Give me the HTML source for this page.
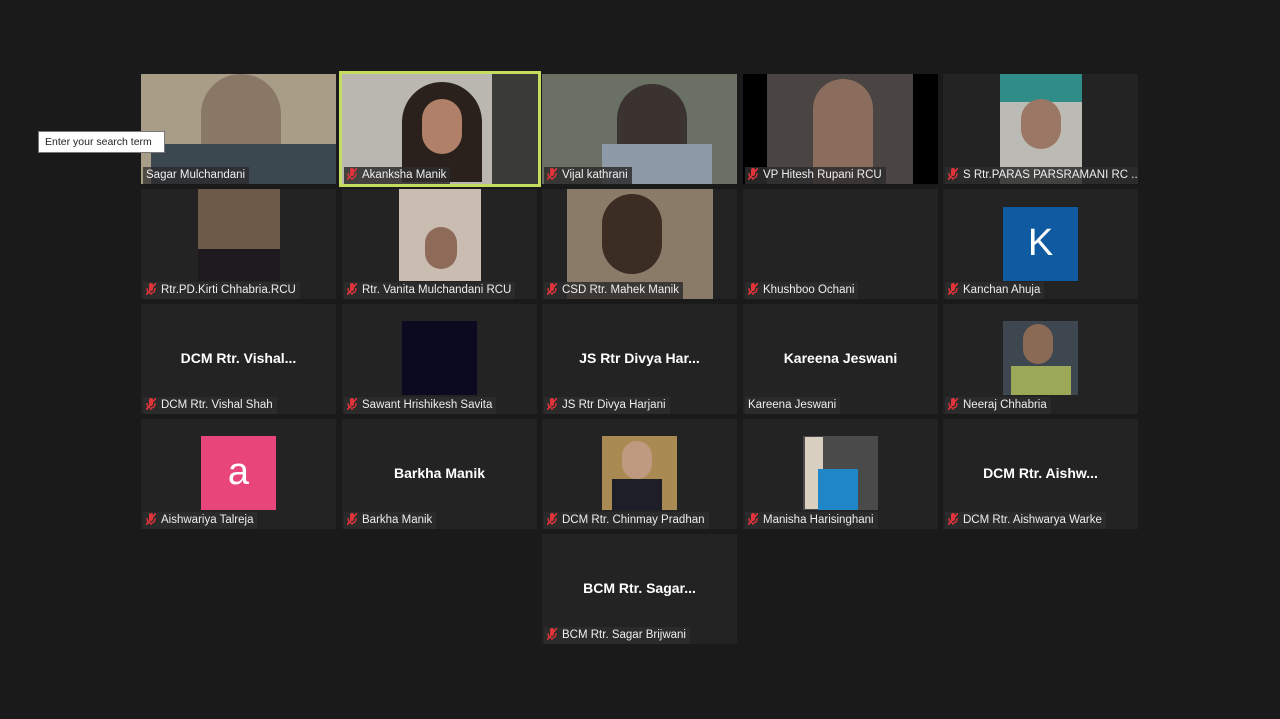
<!DOCTYPE html>
<html><head><meta charset="utf-8"><style>
body{margin:0;width:1280px;height:719px;background:#1a1a1a;position:relative;overflow:hidden;font-family:"Liberation Sans","DejaVu Sans",sans-serif}
.t{position:absolute;width:195px;height:110px;background:#232323;overflow:hidden}
.v{position:absolute}
.l{position:absolute;left:2px;bottom:0;height:17px;line-height:17px;background:rgba(45,45,45,0.85);color:#eee;font-size:11.5px;padding:0 4px 0 3px;white-space:nowrap}
.m{display:inline-block;width:10px;height:12px;vertical-align:-2px;margin-right:5px}
.n{position:absolute;left:0;right:0;top:46px;text-align:center;color:#fff;font-weight:bold;font-size:14px}
.sq{position:absolute;width:75px;height:74px;left:60px;top:17px;color:#fff;font-size:38px;text-align:center;line-height:72px}
</style></head><body>
<svg width="0" height="0" style="position:absolute"><defs><g id="mic"><rect x="3" y="0" width="4" height="8" rx="2" fill="#e0343a"/><path d="M1 5 Q1 10 5 10 Q9 10 9 5 M5 10 V12" stroke="#e0343a" stroke-width="1.3" fill="none"/><path d="M0 12 L10 0" stroke="#e0343a" stroke-width="1.6"/></g></defs></svg>

<!-- row1 -->
<div class="t" style="left:141px;top:74px;background:#a89d86"><div class="v" style="left:60px;top:0;width:80px;height:110px;background:#8a7866;border-radius:40px 40px 0 0"></div><div class="v" style="left:10px;top:70px;width:185px;height:40px;background:#3c4850"></div><div class="l" style="background:rgba(40,40,40,0.7)">Sagar Mulchandani</div></div>
<div class="t" style="left:339px;top:71px;width:196px;height:110px;border:3px solid #c5dd5e;background:#b9b7b0"><div class="v" style="left:60px;top:8px;width:80px;height:100px;background:#2a211c;border-radius:40px 40px 0 0"></div><div class="v" style="left:80px;top:25px;width:40px;height:55px;background:#b08068;border-radius:20px"></div><div class="v" style="left:150px;top:0;width:46px;height:110px;background:#3a3a36"></div><div class="l"><svg class="m" viewBox="0 0 10 12"><use href="#mic"/></svg>Akanksha Manik</div></div>
<div class="t" style="left:542px;top:74px;background:#6b7064"><div class="v" style="left:75px;top:10px;width:70px;height:100px;background:#3a3330;border-radius:35px 35px 0 0"></div><div class="v" style="left:60px;top:70px;width:110px;height:40px;background:#8f9aa8"></div><div class="l"><svg class="m" viewBox="0 0 10 12"><use href="#mic"/></svg>Vijal kathrani</div></div>
<div class="t" style="left:743px;top:74px;background:#000"><div class="v" style="left:24px;top:0;width:146px;height:110px;background:#4a4542"></div><div class="v" style="left:70px;top:5px;width:60px;height:105px;background:#8b6d5d;border-radius:30px 30px 0 0"></div><div class="l"><svg class="m" viewBox="0 0 10 12"><use href="#mic"/></svg>VP Hitesh Rupani RCU</div></div>
<div class="t" style="left:943px;top:74px"><div class="v" style="left:57px;top:0;width:82px;height:110px;background:#bcbab4"></div><div class="v" style="left:57px;top:0;width:82px;height:28px;background:#2f8c86"></div><div class="v" style="left:78px;top:25px;width:40px;height:50px;background:#9b7766;border-radius:20px"></div><div class="l"><svg class="m" viewBox="0 0 10 12"><use href="#mic"/></svg>S Rtr.PARAS PARSRAMANI RC ...</div></div>
<!-- row2 -->
<div class="t" style="left:141px;top:189px"><div class="v" style="left:57px;top:0;width:82px;height:92px;background:#6e5a48"></div><div class="v" style="left:57px;top:60px;width:82px;height:32px;background:#1e1a20"></div><div class="l"><svg class="m" viewBox="0 0 10 12"><use href="#mic"/></svg>Rtr.PD.Kirti Chhabria.RCU</div></div>
<div class="t" style="left:342px;top:189px"><div class="v" style="left:57px;top:0;width:82px;height:92px;background:#c9bcb0"></div><div class="v" style="left:83px;top:38px;width:32px;height:42px;background:#8e6a58;border-radius:16px"></div><div class="l"><svg class="m" viewBox="0 0 10 12"><use href="#mic"/></svg>Rtr. Vanita Mulchandani RCU</div></div>
<div class="t" style="left:542px;top:189px"><div class="v" style="left:25px;top:0;width:146px;height:110px;background:#8a7a68"></div><div class="v" style="left:60px;top:5px;width:60px;height:80px;background:#3b2c24;border-radius:30px"></div><div class="l"><svg class="m" viewBox="0 0 10 12"><use href="#mic"/></svg>CSD Rtr. Mahek Manik</div></div>
<div class="t" style="left:743px;top:189px"><div class="l"><svg class="m" viewBox="0 0 10 12"><use href="#mic"/></svg>Khushboo Ochani</div></div>
<div class="t" style="left:943px;top:189px"><div class="sq" style="background:#0f5aa0;top:18px">K</div><div class="l"><svg class="m" viewBox="0 0 10 12"><use href="#mic"/></svg>Kanchan Ahuja</div></div>
<!-- row3 -->
<div class="t" style="left:141px;top:304px"><div class="n">DCM Rtr. Vishal...</div><div class="l"><svg class="m" viewBox="0 0 10 12"><use href="#mic"/></svg>DCM Rtr. Vishal Shah</div></div>
<div class="t" style="left:342px;top:304px"><div class="sq" style="background:#0b0a20"></div><div class="l"><svg class="m" viewBox="0 0 10 12"><use href="#mic"/></svg>Sawant Hrishikesh Savita</div></div>
<div class="t" style="left:542px;top:304px"><div class="n">JS Rtr Divya Har...</div><div class="l"><svg class="m" viewBox="0 0 10 12"><use href="#mic"/></svg>JS Rtr Divya Harjani</div></div>
<div class="t" style="left:743px;top:304px"><div class="n">Kareena Jeswani</div><div class="l">Kareena Jeswani</div></div>
<div class="t" style="left:943px;top:304px"><div class="sq" style="background:#3e4650"></div><div class="v" style="left:80px;top:20px;width:30px;height:40px;background:#8a6a55;border-radius:15px"></div><div class="v" style="left:68px;top:62px;width:60px;height:29px;background:#9aa858"></div><div class="l"><svg class="m" viewBox="0 0 10 12"><use href="#mic"/></svg>Neeraj Chhabria</div></div>
<!-- row4 -->
<div class="t" style="left:141px;top:419px"><div class="sq" style="background:#e8457a">a</div><div class="l"><svg class="m" viewBox="0 0 10 12"><use href="#mic"/></svg>Aishwariya Talreja</div></div>
<div class="t" style="left:342px;top:419px"><div class="n">Barkha Manik</div><div class="l"><svg class="m" viewBox="0 0 10 12"><use href="#mic"/></svg>Barkha Manik</div></div>
<div class="t" style="left:542px;top:419px"><div class="sq" style="background:#a88a52"></div><div class="v" style="left:80px;top:22px;width:30px;height:38px;background:#c09a80;border-radius:15px"></div><div class="v" style="left:70px;top:60px;width:50px;height:31px;background:#1e1e28"></div><div class="l"><svg class="m" viewBox="0 0 10 12"><use href="#mic"/></svg>DCM Rtr. Chinmay Pradhan</div></div>
<div class="t" style="left:743px;top:419px"><div class="sq" style="background:#4a4a4a"></div><div class="v" style="left:62px;top:18px;width:18px;height:72px;background:#d8cfc0"></div><div class="v" style="left:75px;top:50px;width:40px;height:41px;background:#1f86c8"></div><div class="l"><svg class="m" viewBox="0 0 10 12"><use href="#mic"/></svg>Manisha Harisinghani</div></div>
<div class="t" style="left:943px;top:419px"><div class="n">DCM Rtr. Aishw...</div><div class="l"><svg class="m" viewBox="0 0 10 12"><use href="#mic"/></svg>DCM Rtr. Aishwarya Warke</div></div>
<!-- row5 -->
<div class="t" style="left:542px;top:534px"><div class="n">BCM Rtr. Sagar...</div><div class="l"><svg class="m" viewBox="0 0 10 12"><use href="#mic"/></svg>BCM Rtr. Sagar Brijwani</div></div>

<div style="position:absolute;left:38px;top:131px;width:127px;height:22px;background:#fff;border:1px solid #777;box-sizing:border-box;font-size:10.5px;line-height:20px;padding-left:6px;color:#222;white-space:nowrap">Enter your search term</div>
</body></html>
